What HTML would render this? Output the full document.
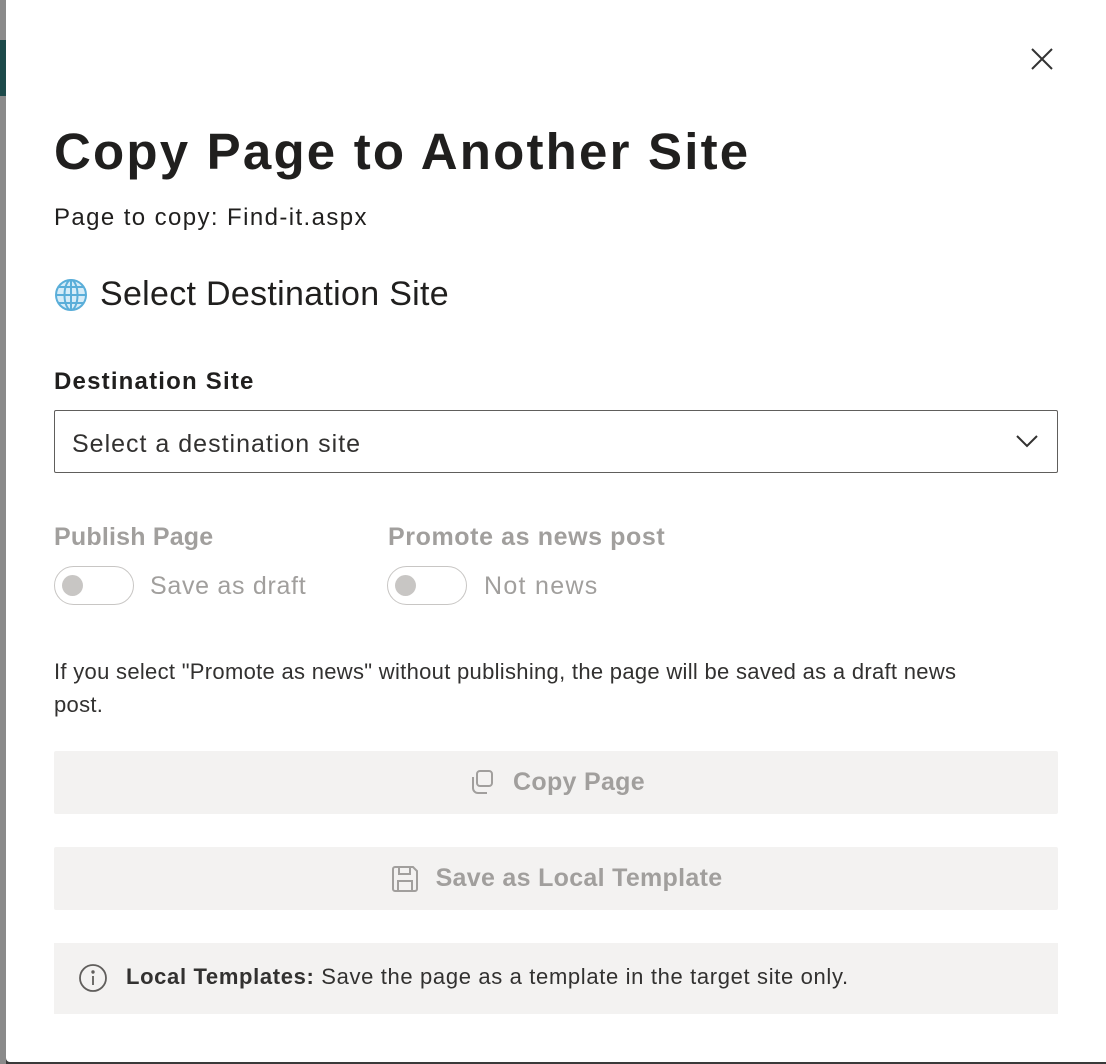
<!DOCTYPE html>
<html><head><style>
body{margin:0;width:1106px;height:1064px;background:#3a3a3a;position:relative;overflow:hidden;font-family:"Liberation Sans",sans-serif;color:#201f1e}
.side{position:absolute;left:0;top:0;width:6px;height:1064px;background:#8a8a8a}
.side2{position:absolute;left:0;top:40px;width:6px;height:56px;background:#1d4a4a}
.dlg{position:absolute;left:6px;top:0;width:1100px;height:1062px;background:#fff;border-radius:0 0 0 4px}
.a{position:absolute;white-space:nowrap}
.btn{position:absolute;left:48px;width:1004px;height:63px;background:#f3f2f1;border-radius:2px;color:#a19f9d;font-size:25px;font-weight:bold;display:flex;align-items:center;justify-content:center;letter-spacing:0.3px}
.tog{position:absolute;width:80px;height:39px;border:1px solid #c8c6c4;border-radius:20px;box-sizing:border-box}
.tog:after{content:"";position:absolute;left:7px;top:8px;width:21px;height:21px;border-radius:50%;background:#c8c6c4}
</style></head><body>
<div class="side"></div><div class="side2"></div>
<div class="dlg">
<svg class="a" style="left:1024px;top:47px" width="24" height="24" viewBox="0 0 24 24"><path d="M2 2L22 22M22 2L2 22" stroke="#333" stroke-width="2"/></svg>
<div class="a" style="left:48px;top:122px;font-size:51px;font-weight:bold;letter-spacing:2.2px">Copy Page to Another Site</div>
<div class="a" style="left:48px;top:204px;font-size:24px;letter-spacing:1.4px">Page to copy: Find-it.aspx</div>
<svg class="a" style="left:48px;top:278px" width="34" height="34" viewBox="0 0 34 34" fill="none" stroke="#5aaed9" stroke-width="2"><circle cx="17" cy="17" r="15" fill="#d6ecf8"/><ellipse cx="17" cy="17" rx="6.5" ry="15"/><path d="M17 2V32M2 17H32M5 9H29M5 25H29"/></svg>
<div class="a" style="left:94px;top:275px;font-size:34px;letter-spacing:0.3px">Select Destination Site</div>
<div class="a" style="left:48px;top:368px;font-size:24px;font-weight:bold;letter-spacing:1.2px">Destination Site</div>
<div class="a" style="left:48px;top:410px;width:1004px;height:63px;border:1px solid #605e5c;border-radius:2px;box-sizing:border-box"></div>
<div class="a" style="left:66px;top:430px;font-size:25px;color:#323130;letter-spacing:1px">Select a destination site</div>
<svg class="a" style="left:1010px;top:434px" width="22" height="14" viewBox="0 0 22 14"><path d="M1 2L11 12L21 2" stroke="#323130" stroke-width="2" fill="none"/></svg>
<div class="a" style="left:48px;top:523px;font-size:25px;font-weight:bold;color:#a19f9d;letter-spacing:0.2px">Publish Page</div>
<div class="a" style="left:382px;top:523px;font-size:25px;font-weight:bold;color:#a19f9d;letter-spacing:0.6px">Promote as news post</div>
<div class="tog" style="left:48px;top:566px"></div>
<div class="a" style="left:144px;top:572px;font-size:25px;color:#a19f9d;letter-spacing:0.7px">Save as draft</div>
<div class="tog" style="left:381px;top:566px"></div>
<div class="a" style="left:478px;top:572px;font-size:25px;color:#a19f9d;letter-spacing:1.3px">Not news</div>
<div class="a" style="left:48px;top:655px;font-size:22px;line-height:33px;color:#323130;white-space:normal;width:955px;letter-spacing:0.3px">If you select "Promote as news" without publishing, the page will be saved as a draft news post.</div>
<div class="btn" style="top:751px"><svg width="30" height="30" viewBox="0 0 30 30" fill="none" stroke="#a19f9d" stroke-width="2" style="margin-right:16px"><rect x="10" y="3" width="15" height="15" rx="3"/><path d="M6 9v11a5 5 0 0 0 5 5h9"/></svg>Copy Page</div>
<div class="btn" style="top:847px"><svg width="30" height="30" viewBox="0 0 30 30" fill="none" stroke="#a19f9d" stroke-width="2" style="margin-right:16px"><path d="M3 5a2 2 0 0 1 2-2h18l4 4v18a2 2 0 0 1-2 2H5a2 2 0 0 1-2-2z"/><path d="M9 3v7h11V3M8 27v-10h14v10"/></svg>Save as Local Template</div>
<div class="a" style="left:48px;top:943px;width:1004px;height:71px;background:#f3f2f1"></div>
<svg class="a" style="left:72px;top:963px" width="30" height="30" viewBox="0 0 30 30" fill="none" stroke="#605e5c" stroke-width="1.8"><circle cx="15" cy="15" r="13"/><path d="M15 13v9"/><circle cx="15" cy="9" r="0.8" fill="#605e5c"/></svg>
<div class="a" style="left:120px;top:964px;font-size:22px;color:#323130;letter-spacing:0.65px"><b>Local Templates:</b> Save the page as a template in the target site only.</div>
</div>
</body></html>
